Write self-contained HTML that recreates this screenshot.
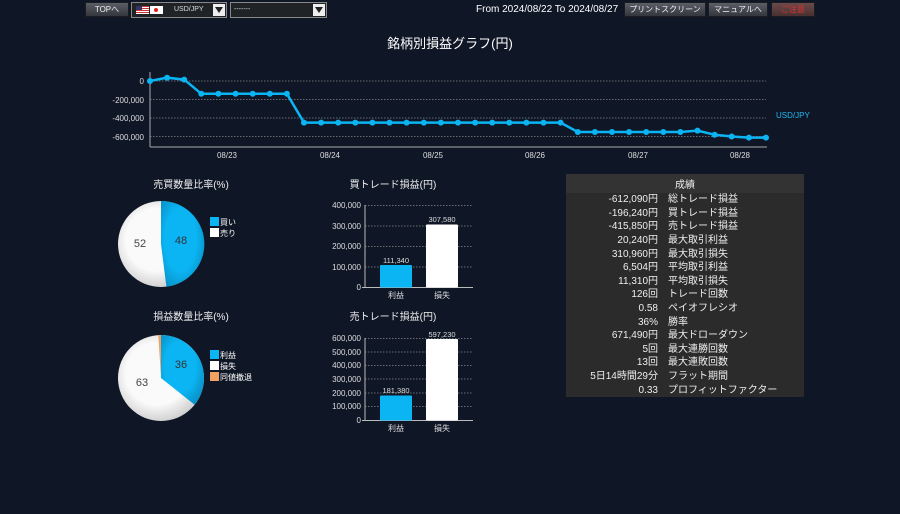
<!DOCTYPE html>
<html><head><meta charset="utf-8"><style>
body{margin:0;width:900px;height:514px;background:#0f1626;overflow:hidden;font-family:"Liberation Sans","Noto Sans CJK JP",sans-serif;color:#e8e8e8;position:relative}
.btn{position:absolute;top:2px;height:15px;background:linear-gradient(#5a5e66,#33363c);border:1px solid #1a1c20;box-sizing:border-box;font-size:8px;color:#eee;text-align:center;line-height:13px}
.sel{position:absolute;top:2px;height:16px;border:1px solid #888;background:#202326;box-sizing:border-box;font-size:7px;color:#ddd}
.arr{position:absolute;right:1px;top:1px;width:12px;height:12px;background:#eee}
.arr:after{content:"";position:absolute;left:2px;top:3px;border-left:4px solid transparent;border-right:4px solid transparent;border-top:6px solid #222}
table{position:absolute;left:566px;top:174px;width:238px;border-collapse:collapse;background:#2b2b2b;font-size:10px;color:#eee}
td{height:13.6px;padding:0;line-height:13px}
td.v{text-align:right;width:92px;padding-right:10px}
th{background:#333;font-weight:normal;height:17px;font-size:10px}
</style></head><body>
<div class="btn" style="left:85px;width:44px">TOPへ</div>
<div class="sel" style="left:131px;width:96px"><span style="position:absolute;left:4px;top:3px;width:13px;height:8px;background:repeating-linear-gradient(#c33 0 1px,#fff 1px 2px)"></span><span style="position:absolute;left:4px;top:3px;width:6px;height:4px;background:#336"></span><span style="position:absolute;left:18px;top:3px;width:13px;height:8px;background:#fff"></span><span style="position:absolute;left:22px;top:5px;width:4px;height:4px;border-radius:50%;background:#d22"></span><span style="position:absolute;left:42px;top:3px;line-height:8px">USD/JPY</span><div class="arr"></div></div>
<div class="sel" style="left:230px;width:97px"><span style="position:absolute;left:3px;top:3px;line-height:8px">-------</span><div class="arr"></div></div>
<div style="position:absolute;left:476px;top:4px;font-size:10px;color:#fff">From 2024/08/22 To 2024/08/27</div>
<div class="btn" style="left:624px;width:82px">プリントスクリーン</div>
<div class="btn" style="left:708px;width:60px">マニュアルへ</div>
<div class="btn" style="left:771px;width:44px;color:#e03030;background:linear-gradient(#6a4a4a,#4a3030)">ご注意</div>
<div style="position:absolute;left:0;width:900px;top:33px;text-align:center;font-size:13px;color:#fff">銘柄別損益グラフ(円)</div>
<svg id="s" width="900" height="514" style="position:absolute;left:0;top:0" font-family="Liberation Sans, Noto Sans CJK JP, sans-serif">
<g stroke="#888" stroke-dasharray="1.5,1.5" stroke-width="0.7">
<line x1="150" x2="766" y1="81" y2="81"/><line x1="150" x2="766" y1="99.5" y2="99.5"/><line x1="150" x2="766" y1="118" y2="118"/><line x1="150" x2="766" y1="136.5" y2="136.5"/>
</g>
<g stroke="#aaa" stroke-width="1"><line x1="150" x2="150" y1="72" y2="147"/><line x1="150" x2="767" y1="147" y2="147"/></g>
<g fill="#ddd" font-size="8" text-anchor="end"><text x="144" y="84">0</text><text x="144" y="103">-200,000</text><text x="144" y="121">-400,000</text><text x="144" y="140">-600,000</text></g>
<g fill="#ddd" font-size="8" text-anchor="middle"><text x="227" y="158">08/23</text><text x="330" y="158">08/24</text><text x="433" y="158">08/25</text><text x="535" y="158">08/26</text><text x="638" y="158">08/27</text><text x="740" y="158">08/28</text></g>
<text x="776" y="118" fill="#22b8f0" font-size="8">USD/JPY</text>
<g id="line"></g>
<text x="191" y="188" text-anchor="middle" font-size="10" fill="#eee">売買数量比率(%)</text>
<defs><radialGradient id="gw" cx="0.45" cy="0.45" r="0.6"><stop offset="0.6" stop-color="#fafafa"/><stop offset="1" stop-color="#c8c8c8"/></radialGradient><radialGradient id="gb" cx="0.45" cy="0.45" r="0.6"><stop offset="0.6" stop-color="#0bb5f3"/><stop offset="1" stop-color="#0895cc"/></radialGradient></defs>
<circle cx="161" cy="244" r="43" fill="url(#gw)"/>
<path d="M161,244 L161,201 A43,43 0 0 1 166.4,286.7 Z" fill="url(#gb)"/>
<text x="181" y="244" font-size="11" fill="#333" text-anchor="middle">48</text><text x="140" y="247" font-size="11" fill="#444" text-anchor="middle">52</text>
<rect x="210" y="217" width="9" height="9" fill="#0bb5f3"/><rect x="210" y="228" width="9" height="9" fill="#fff"/>
<text x="220" y="225" font-size="8" fill="#fff">買い</text><text x="220" y="236" font-size="8" fill="#fff">売り</text>
<text x="191" y="320" text-anchor="middle" font-size="10" fill="#eee">損益数量比率(%)</text>
<circle cx="161" cy="378" r="43" fill="url(#gw)"/>
<path d="M161,378 L161,335 A43,43 0 0 1 194.6,404.8 Z" fill="url(#gb)"/>
<path d="M161,378 L158.3,335.1 A43,43 0 0 1 161,335 Z" fill="#f0a060"/>
<text x="181" y="368" font-size="11" fill="#333" text-anchor="middle">36</text><text x="142" y="386" font-size="11" fill="#444" text-anchor="middle">63</text>
<rect x="210" y="350" width="9" height="9" fill="#0bb5f3"/><rect x="210" y="361" width="9" height="9" fill="#fff"/><rect x="210" y="372" width="9" height="9" fill="#f0a060"/>
<text x="220" y="358" font-size="8" fill="#fff">利益</text><text x="220" y="369" font-size="8" fill="#fff">損失</text><text x="220" y="380" font-size="8" fill="#fff">同値撤退</text>
<text x="393" y="188" text-anchor="middle" font-size="10" fill="#eee">買トレード損益(円)</text>
<g stroke="#888" stroke-dasharray="1.5,1.5" stroke-width="0.7"><line x1="365" x2="473" y1="205.5" y2="205.5"/><line x1="365" x2="473" y1="226" y2="226"/><line x1="365" x2="473" y1="246.5" y2="246.5"/><line x1="365" x2="473" y1="267" y2="267"/></g>
<g stroke="#bbb"><line x1="365" x2="365" y1="205" y2="288"/><line x1="362" x2="473" y1="287.5" y2="287.5"/></g>
<g fill="#ddd" font-size="8" text-anchor="end"><text x="361" y="208">400,000</text><text x="361" y="229">300,000</text><text x="361" y="249">200,000</text><text x="361" y="270">100,000</text><text x="361" y="290">0</text></g>
<rect x="380" y="265" width="32" height="22.5" fill="#0bb5f3" rx="1"/><rect x="426" y="224.5" width="32" height="63" fill="#fff" rx="1"/>
<g fill="#ddd" font-size="7.5" text-anchor="middle"><text x="396" y="263">111,340</text><text x="442" y="222">307,580</text></g>
<g fill="#ddd" font-size="8" text-anchor="middle"><text x="396" y="298">利益</text><text x="442" y="298">損失</text></g>
<text x="393" y="320" text-anchor="middle" font-size="10" fill="#eee">売トレード損益(円)</text>
<g stroke="#888" stroke-dasharray="1.5,1.5" stroke-width="0.7"><line x1="365" x2="473" y1="338.5" y2="338.5"/><line x1="365" x2="473" y1="352" y2="352"/><line x1="365" x2="473" y1="365.5" y2="365.5"/><line x1="365" x2="473" y1="379" y2="379"/><line x1="365" x2="473" y1="393" y2="393"/><line x1="365" x2="473" y1="406.5" y2="406.5"/></g>
<g stroke="#bbb"><line x1="365" x2="365" y1="338" y2="421"/><line x1="362" x2="473" y1="420.5" y2="420.5"/></g>
<g fill="#ddd" font-size="8" text-anchor="end"><text x="361" y="341">600,000</text><text x="361" y="355">500,000</text><text x="361" y="368">400,000</text><text x="361" y="382">300,000</text><text x="361" y="396">200,000</text><text x="361" y="409">100,000</text><text x="361" y="423">0</text></g>
<rect x="380" y="395.5" width="32" height="25" fill="#0bb5f3" rx="1"/><rect x="426" y="339" width="32" height="81.5" fill="#fff" rx="1"/>
<g fill="#ddd" font-size="7.5" text-anchor="middle"><text x="396" y="393">181,380</text><text x="442" y="337">597,230</text></g>
<g fill="#ddd" font-size="8" text-anchor="middle"><text x="396" y="431">利益</text><text x="442" y="431">損失</text></g>
</svg>
<table>
<tr><th colspan="2">成績</th></tr>
<tr><td class="v">-612,090円</td><td>総トレード損益</td></tr>
<tr><td class="v">-196,240円</td><td>買トレード損益</td></tr>
<tr><td class="v">-415,850円</td><td>売トレード損益</td></tr>
<tr><td class="v">20,240円</td><td>最大取引利益</td></tr>
<tr><td class="v">310,960円</td><td>最大取引損失</td></tr>
<tr><td class="v">6,504円</td><td>平均取引利益</td></tr>
<tr><td class="v">11,310円</td><td>平均取引損失</td></tr>
<tr><td class="v">126回</td><td>トレード回数</td></tr>
<tr><td class="v">0.58</td><td>ペイオフレシオ</td></tr>
<tr><td class="v">36%</td><td>勝率</td></tr>
<tr><td class="v">671,490円</td><td>最大ドローダウン</td></tr>
<tr><td class="v">5回</td><td>最大連勝回数</td></tr>
<tr><td class="v">13回</td><td>最大連敗回数</td></tr>
<tr><td class="v">5日14時間29分</td><td>フラット期間</td></tr>
<tr><td class="v">0.33</td><td>プロフィットファクター</td></tr>
</table>
<script>
var v=[0,36,15];for(var i=0;i<6;i++)v.push(-138);for(i=0;i<16;i++)v.push(-450);for(i=0;i<7;i++)v.push(-551);v.push(-536,-580,-600,-612,-612);
var p=[],c='';v.forEach(function(k,i){var x=150+17.11*i,y=81-k*0.0925;p.push(x.toFixed(1)+','+y.toFixed(1));c+='<circle cx="'+x.toFixed(1)+'" cy="'+y.toFixed(1)+'" r="3" fill="#0bb5f3"/>';});
document.getElementById('line').innerHTML='<polyline points="'+p.join(' ')+'" fill="none" stroke="#0bb5f3" stroke-width="2.5"/>'+c;
</script>
</body></html>
